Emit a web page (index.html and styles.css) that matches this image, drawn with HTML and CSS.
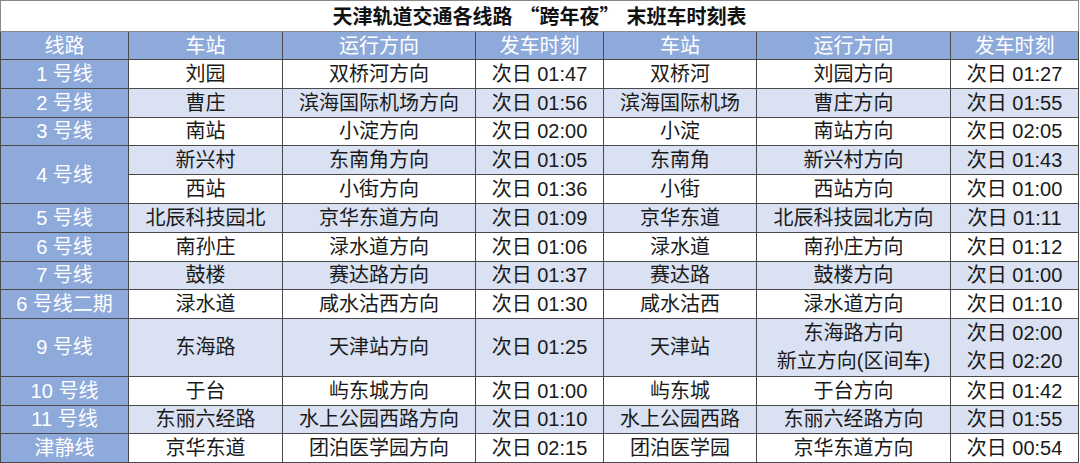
FILE: index.html
```html
<!DOCTYPE html>
<html lang="zh-CN">
<head>
<meta charset="utf-8">
<title>天津轨道交通各线路“跨年夜”末班车时刻表</title>
<link rel="stylesheet" href="styles.css">
</head>
<body>
<table class="sched">
  <colgroup>
    <col class="c-line"><col class="c-st"><col class="c-dir"><col class="c-time">
    <col class="c-st2"><col class="c-dir2"><col class="c-time2">
  </colgroup>
  <tr class="title-row"><td colspan="7" class="title">天津轨道交通各线路<span class="q-open">“</span>跨年夜<span class="q-close">”</span>末班车时刻表</td></tr>
  <tr class="head">
    <th>线路</th><th>车站</th><th>运行方向</th><th>发车时刻</th><th>车站</th><th>运行方向</th><th>发车时刻</th>
  </tr>
  <tr class="r odd"><th>1 号线</th><td>刘园</td><td>双桥河方向</td><td>次日 01:47</td><td>双桥河</td><td>刘园方向</td><td>次日 01:27</td></tr>
  <tr class="r even"><th>2 号线</th><td>曹庄</td><td>滨海国际机场方向</td><td>次日 01:56</td><td>滨海国际机场</td><td>曹庄方向</td><td>次日 01:55</td></tr>
  <tr class="r odd"><th>3 号线</th><td>南站</td><td>小淀方向</td><td>次日 02:00</td><td>小淀</td><td>南站方向</td><td>次日 02:05</td></tr>
  <tr class="r even"><th rowspan="2" class="span">4 号线</th><td>新兴村</td><td>东南角方向</td><td>次日 01:05</td><td>东南角</td><td>新兴村方向</td><td>次日 01:43</td></tr>
  <tr class="r odd"><td>西站</td><td>小街方向</td><td>次日 01:36</td><td>小街</td><td>西站方向</td><td>次日 01:00</td></tr>
  <tr class="r even"><th>5 号线</th><td>北辰科技园北</td><td>京华东道方向</td><td>次日 01:09</td><td>京华东道</td><td>北辰科技园北方向</td><td>次日 01:11</td></tr>
  <tr class="r odd"><th>6 号线</th><td>南孙庄</td><td>渌水道方向</td><td>次日 01:06</td><td>渌水道</td><td>南孙庄方向</td><td>次日 01:12</td></tr>
  <tr class="r even"><th>7 号线</th><td>鼓楼</td><td>赛达路方向</td><td>次日 01:37</td><td>赛达路</td><td>鼓楼方向</td><td>次日 01:00</td></tr>
  <tr class="r odd"><th>6 号线二期</th><td>渌水道</td><td>咸水沽西方向</td><td>次日 01:30</td><td>咸水沽西</td><td>渌水道方向</td><td>次日 01:10</td></tr>
  <tr class="r even tall"><th>9 号线</th><td>东海路</td><td>天津站方向</td><td>次日 01:25</td><td>天津站</td><td class="two"><span>东海路方向</span><span>新立方向(区间车)</span></td><td class="two"><span>次日 02:00</span><span>次日 02:20</span></td></tr>
  <tr class="r odd"><th>10 号线</th><td>于台</td><td>屿东城方向</td><td>次日 01:00</td><td>屿东城</td><td>于台方向</td><td>次日 01:42</td></tr>
  <tr class="r even"><th>11 号线</th><td>东丽六经路</td><td>水上公园西路方向</td><td>次日 01:10</td><td>水上公园西路</td><td>东丽六经路方向</td><td>次日 01:55</td></tr>
  <tr class="r odd"><th>津静线</th><td>京华东道</td><td>团泊医学园方向</td><td>次日 02:15</td><td>团泊医学园</td><td>京华东道方向</td><td>次日 00:54</td></tr>
</table>
</body>
</html>
```

FILE: styles.css
```css
html, body {
  margin: 0;
  padding: 0;
  background: #ffffff;
}

body {
  font-family: "Liberation Sans", "Noto Sans CJK SC", sans-serif;
  color: #1a1a1a;
}

.sched {
  border-collapse: collapse;
  table-layout: fixed;
  width: 1078px;
  font-size: 20px;
  border: 1px solid #6f6f6f;
}

.c-line { width: 128px; }
.c-st { width: 154px; }
.c-dir { width: 193px; }
.c-time { width: 128px; }
.c-st2 { width: 153px; }
.c-dir2 { width: 194px; }
.c-time2 { width: 128px; }

.sched td,
.sched th {
  border: 1px solid #4a4a4a;
  padding: 0;
  text-align: center;
  vertical-align: middle;
  line-height: 26px;
  white-space: nowrap;
  font-weight: normal;
}

.title-row { height: 31px; }

.sched td.title {
  font-family: "Noto Sans CJK SC", sans-serif;
  font-weight: bold;
  font-size: 20px;
  color: #111111;
  background: #ffffff;
  border-color: #8a8a8a;
  line-height: 28px;
}

.q-open {
  display: inline-block;
  margin-left: 7px;
}

.q-close {
  display: inline-block;
  margin-right: 7px;
}

.head { height: 28px; }

.head th {
  background: #8eaadb;
  color: #ffffff;
}

.r { height: 28.8px; }
.r.tall { height: 57.6px; }

.r th {
  background: #8eaadb;
  color: #ffffff;
}

.r.odd td { background: #ffffff; }
.r.even td { background: #d9e1f2; }

.sched td.two span {
  display: block;
  line-height: 28px;
}
```
